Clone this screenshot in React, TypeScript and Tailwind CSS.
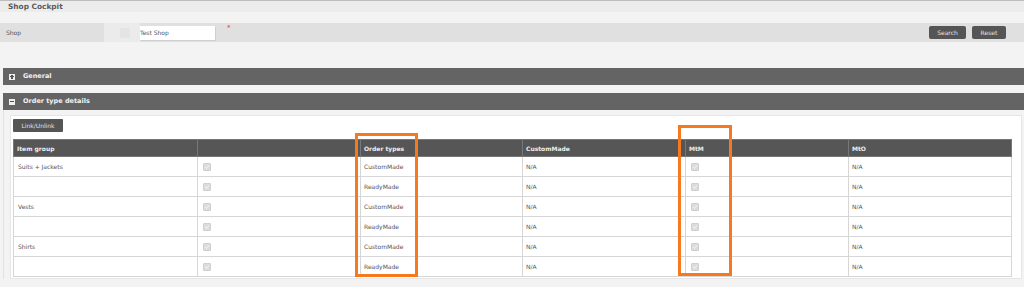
const rows = [
  { group: "Suits + Jackets", type: "CustomMade" },
  { group: "", type: "ReadyMade" },
  { group: "Vests", type: "CustomMade" },
  { group: "", type: "ReadyMade" },
  { group: "Shirts", type: "CustomMade" },
  { group: "", type: "ReadyMade" },
];

const Check = () => (
  <span className="flex h-[8px] w-[8px] items-center justify-center rounded-[1px] border border-[#cfcfcf] bg-[#dcdcdc]">
    <svg viewBox="0 0 8 8" className="h-[6px] w-[6px]">
      <path d="M1.5 4.2 L3.2 5.8 L6.5 2" fill="none" stroke="#f7f7f7" strokeWidth="1.3" />
    </svg>
  </span>
);

const SectionBar = ({ title, open }: { title: string; open: boolean }) => (
  <div className="ml-[3px] flex h-[17px] items-center bg-[#646464] pl-[6px]">
    <span className="relative flex h-[6px] w-[6px] items-center justify-center bg-[#eeeeee]">
      <span className="absolute h-[1.5px] w-[4px] bg-[#555]" />
      {!open && <span className="absolute h-[4px] w-[1.5px] bg-[#555]" />}
    </span>
    <span className="ml-[8px] text-[6.5px] font-bold text-[#f2f2f2]">{title}</span>
  </div>
);

const cols = ["w-[184px]", "w-[163px]", "w-[162px]", "w-[163px]", "w-[163px]", "w-[163px]"];

export default function App() {
  return (
    <div
      className="relative h-[287px] w-[1024px] overflow-hidden bg-[#f3f3f3] text-[#555]"
      style={{ fontFamily: '"DejaVu Sans", Verdana, sans-serif' }}
    >
      <div className="flex h-[12px] items-center border-t border-[#bdbdbd] bg-[#ececec] pl-[8px]">
        <span className="text-[7.4px] font-bold text-[#5a5a5a]">Shop Cockpit</span>
      </div>
      <div className="h-[11px]" />
      <div className="flex h-[19px] items-center bg-[#e0e0e0]">
        <span className="w-[104px] pl-[6px] text-[6px]">Shop</span>
        <div className="flex h-[19px] w-[36px] items-center bg-[#ebebeb]">
          <div className="ml-[16px] h-[10px] w-[10px] bg-[#e4e4e4]" />
        </div>
        <div className="flex h-[14px] w-[75px] items-center bg-white text-[6px] shadow-[1px_1px_0_#cfcfcf]">
          Test Shop
        </div>
        <span className="ml-[12px] mb-[8px] text-[7px] leading-none text-[#e04040]">*</span>
        <div className="ml-auto mr-[18px] flex gap-[6px]">
          <button className="h-[13px] w-[37px] rounded-[2px] bg-[#555] text-[6px] text-[#e2e2e2]">Search</button>
          <button className="h-[13px] w-[34px] rounded-[2px] bg-[#555] text-[6px] text-[#e2e2e2]">Reset</button>
        </div>
      </div>
      <div className="h-[26px]" />
      <SectionBar title="General" open={false} />
      <div className="h-[8px]" />
      <SectionBar title="Order type details" open={true} />
      <div className="ml-[3px] border-l border-[#e2e2e2] pl-[6px] pt-[5px]">
        <div className="mr-[2px] flex h-[164px] flex-col items-start border border-[#e6e6e6] bg-white pl-[2px] pt-[3px]">
          <button className="block h-[13px] w-[50px] rounded-[1px] bg-[#555] text-[6px] text-[#e2e2e2]">Link/Unlink</button>
          <table className="mt-[7px] w-[998px] table-fixed border-collapse text-[6px]">
            <thead>
              <tr className="h-[17px] bg-[#565656] text-left text-[#eeeeee]">
                {["Item group", "", "Order types", "CustomMade", "MtM", "MtO"].map((h, i) => (
                  <th key={i} className={`${cols[i]} border border-[#777] pl-[3px] font-bold`}>
                    {h}
                  </th>
                ))}
              </tr>
            </thead>
            <tbody>
              {rows.map((r, i) => (
                <tr key={i} className="h-[20px]">
                  <td className="border border-[#d6d6d6] pl-[4px]">{r.group}</td>
                  <td className="border border-[#d6d6d6] pl-[5px]">
                    <Check />
                  </td>
                  <td className="border border-[#d6d6d6] pl-[3px]">{r.type}</td>
                  <td className="border border-[#d6d6d6] pl-[3px]">N/A</td>
                  <td className="border border-[#d6d6d6] pl-[5px]">
                    <Check />
                  </td>
                  <td className="border border-[#d6d6d6] pl-[3px]">N/A</td>
                </tr>
              ))}
            </tbody>
          </table>
        </div>
      </div>
      <div className="absolute left-[355px] top-[133px] h-[144px] w-[63px] border-[3px] border-[#f57a1e]" />
      <div className="absolute left-[678px] top-[125px] h-[151px] w-[54px] border-[3px] border-[#f57a1e]" />
    </div>
  );
}
